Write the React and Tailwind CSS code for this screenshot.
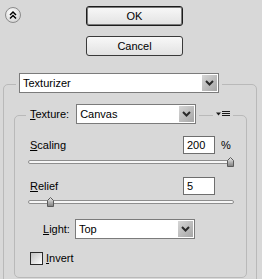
import React from "react";

const BG = "bg-[#d8d8d8]";

function Arrow() {
  return (
    <div className="w-[15px] h-[16px] mr-[1px] flex items-center justify-center bg-linear-to-br from-[#d6d6d6] to-[#a6a6a6]">
      <svg width="9" height="6" viewBox="0 0 9 6">
        <polyline points="1,1 4.5,4.5 8,1" fill="none" stroke="#2a2a2a" strokeWidth="2" />
      </svg>
    </div>
  );
}

function Select({ value, className }) {
  return (
    <div className={`flex items-center h-[20px] border border-[#7b7b7b] bg-white ${className}`}>
      <span className="flex-1 pl-[3px] leading-none">{value}</span>
      <Arrow />
    </div>
  );
}

function Slider({ pos }) {
  return (
    <div className="relative ml-[13px] w-[206px] h-[10px]">
      <div className="absolute left-0 right-0 top-[3px] h-[4px] rounded-full border border-[#8e8e8e] bg-[#f6f6f6]" />
      <svg
        className="absolute top-0"
        style={{ left: pos }}
        width="7"
        height="10"
        viewBox="0 0 7 10"
      >
        <defs>
          <linearGradient id={`t${pos}`} x1="0" y1="0" x2="0" y2="1">
            <stop offset="0" stopColor="#eeeeee" />
            <stop offset="1" stopColor="#7c7c7c" />
          </linearGradient>
        </defs>
        <path d="M3.5 0.5 L6.5 3.5 V9.5 H0.5 V3.5 Z" fill={`url(#t${pos})`} stroke="#5a5a5a" />
      </svg>
    </div>
  );
}

function Field({ value }) {
  return (
    <div className="w-[32px] h-[18px] border border-[#6e6e6e] bg-white pl-[3px] flex items-center leading-none">
      {value}
    </div>
  );
}

export default function App() {
  return (
    <div className={`w-[262px] h-[279px] overflow-hidden ${BG} text-[11px] text-black font-['Liberation_Sans',Arial,sans-serif]`}>
      <div className="flex items-start pt-[6px]">
        <div className="ml-[5px] mt-[1px]">
          <svg width="16" height="16" viewBox="0 0 16 16">
            <defs>
              <radialGradient id="cg" cx="0.4" cy="0.35" r="0.7">
                <stop offset="0" stopColor="#ffffff" />
                <stop offset="1" stopColor="#d2d2d2" />
              </radialGradient>
            </defs>
            <circle cx="8" cy="8" r="7.5" fill="url(#cg)" stroke="#8a8a8a" />
            <polyline points="5,8 8,5 11,8" fill="none" stroke="#000" strokeWidth="1.5" />
            <polyline points="5,11.5 8,8.5 11,11.5" fill="none" stroke="#000" strokeWidth="1.5" />
          </svg>
        </div>
        <div className="ml-[65px] flex flex-col gap-[10px]">
          <button className="w-[97px] h-[20px] rounded-[3px] border border-[#1c1c1c] shadow-[inset_0_0_0_1px_#7a7a7a] bg-linear-to-b from-[#f8f8f8] to-[#e2e2e2] leading-none">
            OK
          </button>
          <button className="w-[97px] h-[20px] rounded-[3px] border border-[#3a3a3a] bg-linear-to-b from-[#f8f8f8] to-[#e2e2e2] leading-none">
            Cancel
          </button>
        </div>
      </div>

      <div className="mt-[28px] ml-[3px] w-[254px] h-[260px] border border-[#b9b9b9] rounded-[5px]">
        <div className="flex -mt-[12px] ml-[12px]">
          <div className={`px-[3px] ${BG}`}>
            <Select value="Texturizer" className="w-[200px]" />
          </div>
        </div>

        <div className="mt-[22px] ml-[10px] w-[233px] border border-[#b9b9b9] rounded-[5px] pb-[10px]">
          <div className="flex items-center -mt-[12px] h-[20px]">
            <div className={`ml-[11px] px-[4px] pr-[3px] flex items-center ${BG}`}>
              <span className="mr-[7px]">
                <span className="underline">T</span>exture:
              </span>
              <Select value="Canvas" className="w-[120px]" />
            </div>
            <div className={`ml-[14px] px-[3px] h-[20px] flex items-center ${BG}`}>
              <svg width="14" height="6" viewBox="0 0 14 6">
                <polygon points="0,1.5 5,1.5 2.5,4.5" fill="#1a1a1a" />
                <rect x="6" y="0" width="8" height="1" fill="#1a1a1a" />
                <rect x="6" y="2" width="8" height="1" fill="#1a1a1a" />
                <rect x="6" y="4" width="8" height="1" fill="#1a1a1a" />
              </svg>
            </div>
          </div>

          <div className="flex items-center mt-[12px] h-[18px] pl-[15px]">
            <span className="w-[153px]">
              <span className="underline">S</span>caling
            </span>
            <Field value="200" />
            <span className="ml-[6px]">%</span>
          </div>
          <div className="mt-[3px]">
            <Slider pos={199} />
          </div>

          <div className="flex items-center mt-[10px] h-[18px] pl-[15px]">
            <span className="w-[153px]">
              <span className="underline">R</span>elief
            </span>
            <Field value="5" />
          </div>
          <div className="mt-[2px]">
            <Slider pos={19} />
          </div>

          <div className="flex items-center mt-[12px] ml-[28px]">
            <span className="w-[32px]">
              <span className="underline">L</span>ight:
            </span>
            <Select value="Top" className="w-[120px]" />
          </div>

          <div className="flex items-center mt-[11px] ml-[15px]">
            <div className="w-[13px] h-[13px] border border-[#2a2a2a] bg-linear-to-br from-[#c2c2c2] to-white" />
            <span className="ml-[3px]">
              <span className="underline">I</span>nvert
            </span>
          </div>
        </div>
      </div>
    </div>
  );
}
